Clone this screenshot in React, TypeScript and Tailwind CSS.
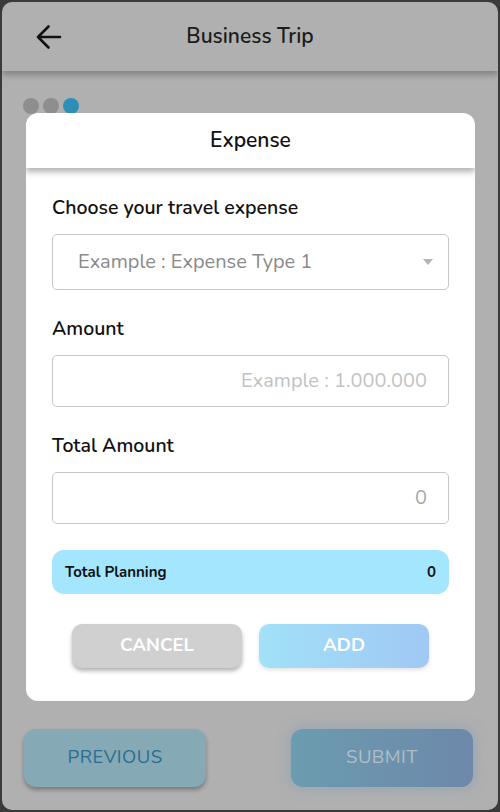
const font = { fontFamily: "Nunito, Lato, 'Noto Sans', sans-serif" };

export default function App() {
    return (
        <div className="h-[812px] w-[500px] bg-[#3a3a3a] p-[2px]" style={font}>
            <div className="relative flex h-full flex-col rounded-[10px] bg-[#b0b0b0] overflow-hidden">
                {/* Header */}
                <div className="flex h-[69px] shrink-0 items-center pl-[34px] pr-[22px] shadow-[0_4px_6px_rgba(0,0,0,0.25)]">
                    <svg width="26" height="26" viewBox="0 0 26 26" fill="none" stroke="#111" strokeWidth="2.6" strokeLinecap="round" strokeLinejoin="round">
                        <path d="M24 13H2M12.5 2.5 2 13l10.5 10.5" />
                    </svg>
                    <h1 className="flex-1 pr-[38px] text-center text-[21px] font-semibold text-[#1c1c1c]">Business Trip</h1>
                </div>

                {/* Step dots */}
                <div className="flex gap-[4px] px-[21px] pt-[27px]">
                    <span className="h-4 w-4 rounded-full bg-[#8e8e8e]" />
                    <span className="h-4 w-4 rounded-full bg-[#8e8e8e]" />
                    <span className="h-4 w-4 rounded-full bg-[#2b8fb8]" />
                </div>

                <div className="flex-1" />

                {/* Bottom buttons (dimmed) */}
                <div className="flex justify-between pl-[22px] pr-[25px] pb-[23px]">
                    <button className="h-[58px] w-[182px] rounded-[12px] bg-[#85a9b5] text-[18.5px] tracking-wide text-[#2a6e8f] shadow-[0_3px_4px_rgba(0,0,0,0.3)]">
                        PREVIOUS
                    </button>
                    <button className="h-[58px] w-[182px] rounded-[12px] bg-gradient-to-r from-[#6b9caf] to-[#6d88ab] text-[18.5px] tracking-wide text-[#b1bfc8] shadow-[0_0_14px_rgba(110,150,180,0.5)]">
                        SUBMIT
                    </button>
                </div>

                {/* Modal */}
                <div className="absolute left-[24px] top-[111px] w-[449px] overflow-hidden rounded-[12px] bg-white">
                    <div className="flex h-[55px] items-center justify-center shadow-[0_4px_6px_rgba(0,0,0,0.3)]">
                        <h2 className="text-[21px] font-semibold text-[#111]">Expense</h2>
                    </div>
                    <div className="px-[26px] pt-[28px] pb-[33px]">
                        <label className="block text-[19.5px] font-semibold leading-[24px] text-[#111]">Choose your travel expense</label>
                        <div className="mt-[14px] flex h-[56px] items-center justify-between rounded-[5px] border border-[#c6c6c6] pl-[25px] pr-[14px]">
                            <span className="text-[20px] text-[#8a8a8a]">Example : Expense Type 1</span>
                            <svg width="12" height="8" viewBox="0 0 12 8"><path d="M1 1h10L6 7z" fill="#b4b4b4" /></svg>
                        </div>

                        <label className="mt-[27px] block text-[19.5px] font-semibold leading-[24px] text-[#111]">Amount</label>
                        <div className="mt-[14px] flex h-[52px] items-center justify-end rounded-[5px] border border-[#c6c6c6] pr-[21px]">
                            <span className="text-[20px] text-[#c2c2c2]">Example : 1.000.000</span>
                        </div>

                        <label className="mt-[27px] block text-[19.5px] font-semibold leading-[24px] text-[#111]">Total Amount</label>
                        <div className="mt-[14px] flex h-[52px] items-center justify-end rounded-[5px] border border-[#c6c6c6] pr-[21px]">
                            <span className="text-[20px] text-[#a8a8a8]">0</span>
                        </div>

                        <div className="mt-[26px] flex h-[44px] items-center justify-between rounded-[12px] bg-[#a3e6fd] px-[13px]">
                            <span className="text-[15px] font-bold text-[#111]">Total Planning</span>
                            <span className="text-[15px] font-bold text-[#111]">0</span>
                        </div>

                        <div className="mt-[30px] flex justify-center gap-[17px]">
                            <button className="h-[44px] w-[170px] rounded-[10px] bg-[#d0d0d0] text-[18.5px] font-bold text-white shadow-[0_3px_4px_rgba(0,0,0,0.3)]">
                                CANCEL
                            </button>
                            <button className="h-[44px] w-[170px] rounded-[10px] bg-gradient-to-r from-[#a1e1f8] to-[#a0c8f4] text-[18.5px] font-bold text-white shadow-[0_2px_4px_rgba(0,0,0,0.12)]">
                                ADD
                            </button>
                        </div>
                    </div>
                </div>
            </div>
        </div>
    );
}
